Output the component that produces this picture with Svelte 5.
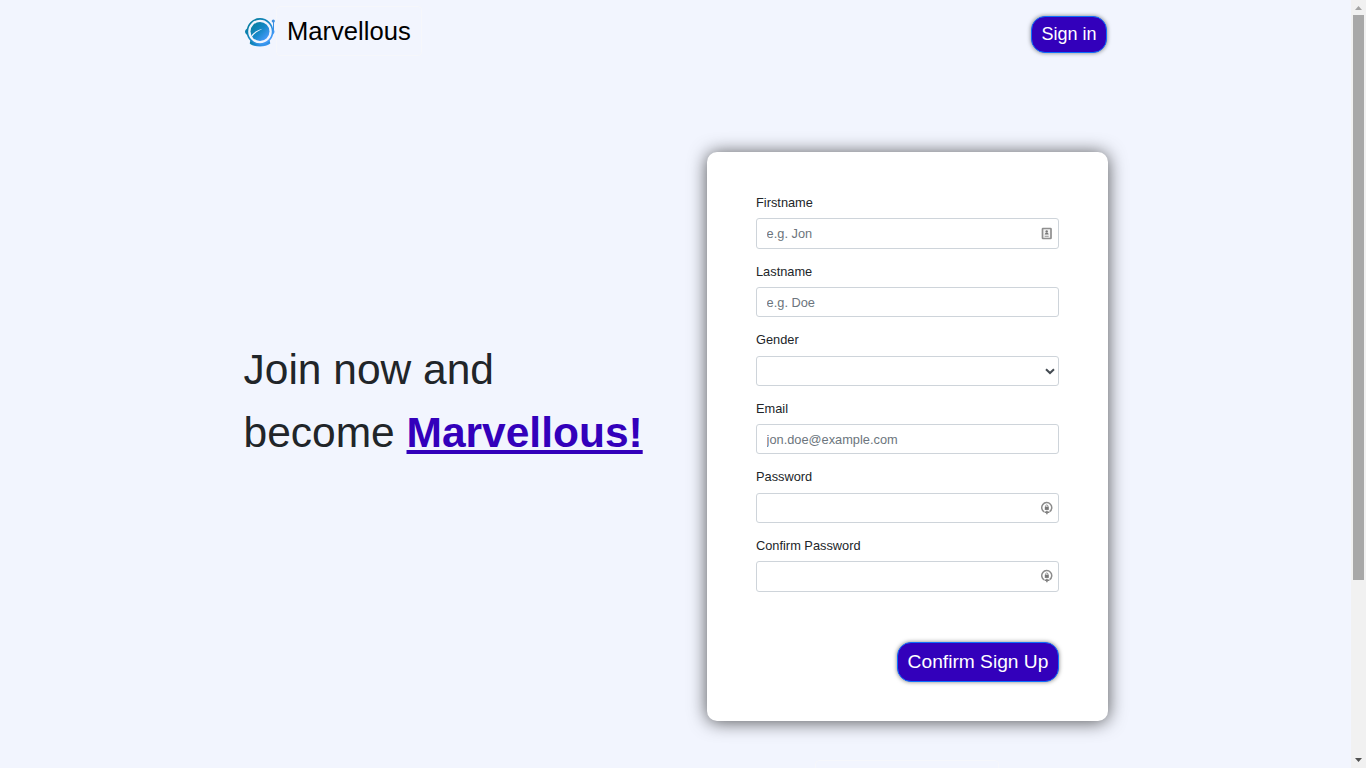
<script>
  const fields = [
    { id: 'firstname', label: 'Firstname', type: 'text', hint: 'e.g. Jon', icon: 'card' },
    { id: 'lastname', label: 'Lastname', type: 'text', hint: 'e.g. Doe' },
    { id: 'gender', label: 'Gender', type: 'select' },
    { id: 'email', label: 'Email', type: 'email', hint: 'jon.doe@example.com' },
    { id: 'password', label: 'Password', type: 'password', icon: 'key' },
    { id: 'confirm', label: 'Confirm Password', type: 'password', icon: 'key' }
  ];
</script>

<div class="window">
  <div class="page">
    <div class="container">
      <header>
        <div class="brand">
          <svg class="logo" viewBox="0 0 32 32" width="32" height="32">
            <defs>
              <linearGradient id="sky" x1="0.1" y1="0.1" x2="0.9" y2="0.9">
                <stop offset="0" stop-color="#087e9f" />
                <stop offset="0.5" stop-color="#1688c8" />
                <stop offset="1" stop-color="#4a9cff" />
              </linearGradient>
            </defs>
            <path d="M6.500 24 C11 28.500 21 28.500 25.500 24 L26.300 27.500 C22 31.500 10 31.500 5.700 27.500Z" fill="url(#sky)" />
            <path d="M4.300 11.500 L2 13.500 Q0 15.500 2 18 L4.300 20Z" fill="#0c80ae" />
            <path d="M27.700 11.500 L29.500 13.500 Q31.500 15.500 29.500 18 L27.700 20Z" fill="#4598f5" />
            <circle cx="16" cy="15.500" r="12.600" fill="#f2f5fe" stroke="url(#sky)" stroke-width="1.600" />
            <circle cx="16" cy="15.500" r="9.500" fill="url(#sky)" />
            <path d="M7.500 19.500 C9 16.500 13 14.500 18.500 12.800 C15 15.200 11.500 16 8.200 20.500Z" fill="#f2f5fe" />
            <path d="M29.500 6 V14" stroke="#3990e8" stroke-width="1" />
            <circle cx="29.300" cy="5" r="1.600" fill="#3f91df" />
          </svg>
          <a class="name" href="#home">Marvellous</a>
        </div>
        <button class="btn signin">Sign in</button>
      </header>

      <main>
        <h1>Join now and<br />become <strong>Marvellous!</strong></h1>
        <form class="card">
          {#each fields as f}
            <div class="field">
              <label for={f.id}>{f.label}</label>
              <div class="control">
                {#if f.type === 'select'}
                  <select id={f.id}><option value=""></option></select>
                  <svg class="chevron" width="10" height="7" viewBox="0 0 10 7">
                    <path d="M1 1.200 L5 5 L9 1.200" fill="none" stroke="#444b52" stroke-width="2" />
                  </svg>
                {:else}
                  <input id={f.id} type={f.type} placeholder={f.hint} />
                {/if}
                {#if f.icon === 'card'}
                  <svg class="hint" width="12" height="13" viewBox="0 0 12 13">
                    <rect x="1.500" y="1.500" width="8.500" height="10" rx="0.500" fill="#f3f3f3" stroke="#8f8f8f" stroke-width="1.700" />
                    <circle cx="5.700" cy="4.400" r="1.200" fill="#777" />
                    <path d="M3.700 7.500 Q4 5.500 5.700 5.500 Q7.400 5.500 7.700 7.500Z" fill="#777" />
                    <path d="M3.700 9.300 H7.700" stroke="#999" stroke-width="1" />
                  </svg>
                {:else if f.icon === 'key'}
                  <svg class="hint key" width="12" height="14" viewBox="0 0 12 14">
                    <path d="M3.200 10.900 A5 5 0 1 1 8.600 10.700" fill="none" stroke="#8c8c8c" stroke-width="1.500" />
                    <path d="M3.800 5.700 H7.800 V8.900 H3.800Z" fill="#777" />
                    <path d="M4.600 5.800 V4.700 Q5.800 3 7 4.700 V5.800" fill="none" stroke="#888" stroke-width="0.900" />
                    <path d="M3.600 11.200 H8.400 M5.900 9.700 V13.200" stroke="#808080" stroke-width="1.500" />
                  </svg>
                {/if}
              </div>
            </div>
          {/each}
          <button class="btn submit" type="button">Confirm Sign Up</button>
        </form>
      </main>
      <div class="next"></div>
    </div>
  </div>
  <div class="scrollbar">
    <svg width="15" height="15" viewBox="0 0 15 15"><path d="M4 10 L7.500 6 L11 10Z" fill="#a3a3a3" /></svg>
    <div class="thumb"></div>
    <svg class="down" width="15" height="15" viewBox="0 0 15 15"><path d="M4 5 H11 L7.500 9Z" fill="#505050" /></svg>
  </div>
</div>

<style>
  :global(body) { margin: 0; overflow: hidden; }
  .window, .window * { box-sizing: border-box; }
  .window {
    display: flex;
    height: 768px;
    overflow: hidden;
    background: #f2f5fe;
    color: #212529;
    font-family: "Liberation Sans", Arial, sans-serif;
  }
  .page { flex: 1; min-width: 0; }
  .container { width: 864.500px; margin-left: 243.500px; }
  header {
    display: flex;
    justify-content: space-between;
    align-items: flex-start;
    height: 152px;
    padding-top: 6px;
  }
  .brand { display: flex; }
  .logo { display: block; margin-top: 9.500px; }
  .name {
    height: 50px;
    padding: 0 10.500px;
    border: 1px solid #f6f7fb;
    border-radius: 4px;
    font-size: 25.6px;
    line-height: 49px;
    color: #000;
    text-decoration: none;
  }
  .btn {
    display: block;
    border: 1px solid #0d6efd;
    background: #3300bb;
    color: #fff;
    font-family: inherit;
    white-space: nowrap;
    box-shadow: 0 0 4px rgba(0, 0, 0, 0.5);
  }
  .signin {
    width: 76px;
    height: 37px;
    margin: 9.500px 1px 0 0;
    padding: 0;
    border-radius: 14px;
    font-size: 18px;
  }
  main { display: flex; justify-content: space-between; }
  h1 {
    margin: 186px 0 0;
    font-size: 42.5px;
    font-weight: 400;
    line-height: 63px;
    white-space: nowrap;
  }
  strong { color: #3300bb; text-decoration: underline; }
  .card {
    width: 401px;
    height: 569px;
    padding: 41px 49px 0;
    border-radius: 10px;
    background: #fff;
    box-shadow: 0 1px 18px rgba(0, 0, 0, 0.67);
  }
  .field { height: 68.6px; }
  label {
    display: block;
    height: 25.400px;
    font-size: 12.8px;
    line-height: 19.2px;
  }
  .control { position: relative; height: 30.2px; }
  input, select {
    display: block;
    width: 100%;
    height: 100%;
    padding: 0 9.600px;
    border: 1px solid #ced4da;
    border-radius: 3px;
    background: #fff;
    font-family: inherit;
    font-size: 12.8px;
    outline: 0;
    appearance: none;
  }
  input::placeholder { color: #6c757d; opacity: 1; }
  .chevron { position: absolute; right: 4px; top: 12px; }
  .hint { position: absolute; right: 6px; top: 9px; }
  .key { top: 8px; }
  .submit {
    width: 162px;
    height: 40px;
    margin: 37.200px 0 0 auto;
    padding: 0;
    border-radius: 14px;
    font-size: 19.2px;
  }
  .next {
    width: 184px;
    height: 60px;
    margin: 39px 0 0 571.500px;
    border: 1px solid #f6f7fb;
    border-radius: 4px;
  }
  .scrollbar {
    display: flex;
    flex-direction: column;
    align-items: center;
    width: 15px;
    background: #f1f1f1;
  }
  .scrollbar svg { display: block; flex: none; }
  .thumb { width: 11px; height: 565px; background: #a8a8a8; }
  .down { margin-top: auto; }
</style>
